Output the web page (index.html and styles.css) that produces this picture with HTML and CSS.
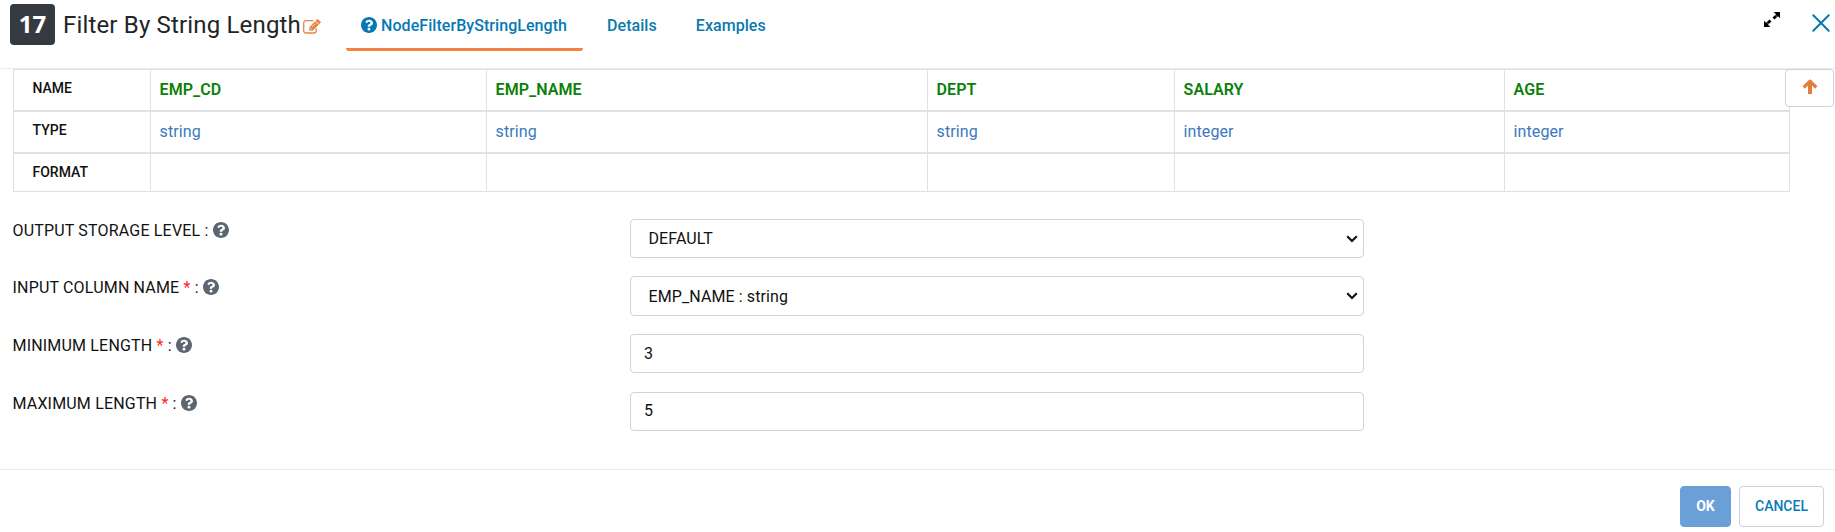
FILE: index.html
```html
<!DOCTYPE html>
<html lang="en">
<head>
<meta charset="utf-8">
<title>Filter By String Length</title>
<link rel="stylesheet" href="styles.css">
</head>
<body>
<svg class="sprite" aria-hidden="true">
  <symbol id="help" viewBox="8 8 496 496"><path fill="currentColor" d="M504 256c0 136.997-111.043 248-248 248S8 392.997 8 256C8 119.083 119.043 8 256 8s248 111.083 248 248zM262.655 90c-54.497 0-89.255 22.957-116.549 63.758-3.536 5.286-2.353 12.415 2.715 16.258l34.699 26.31c5.205 3.947 12.621 3.008 16.665-2.122 17.864-22.658 30.113-35.797 57.303-35.797 20.429 0 45.698 13.148 45.698 32.958 0 14.976-12.363 22.667-32.534 33.976C247.128 238.528 216 254.941 216 296v4c0 6.627 5.373 12 12 12h56c6.627 0 12-5.373 12-12v-1.333c0-28.462 83.186-29.647 83.186-106.667 0-58.002-60.165-102-116.531-102zM256 338c-25.365 0-46 20.635-46 46 0 25.364 20.635 46 46 46s46-20.636 46-46c0-25.365-20.635-46-46-46z"/></symbol>
  <symbol id="chevron" viewBox="0 0 12 8"><path d="M1.200 1.200L6 6l4.800-4.800" fill="none" stroke="currentColor" stroke-width="2.100"/></symbol>
</svg>
<header class="header">
  <span class="badge">17</span>
  <h1 class="title">Filter By String Length</h1>
  <svg class="edit" viewBox="0 0 18 15" fill="none" stroke="currentColor"><path d="M13.2 9.300v2.400a2.300 2.300 0 0 1-2.300 2.300H3a2.300 2.300 0 0 1-2.300-2.300V4A2.300 2.300 0 0 1 3 1.700h7.300" stroke-width="1.300"/><path d="M6.300 11.800V8.200L13.800.5q.8-.8 1.600 0l2 2q.8.800 0 1.600L9.800 11.800z" fill="currentColor" stroke="none"/><path d="M12.300 1.900l3.600 3.600" stroke="#fff" stroke-width=".8"/><path d="M8.800 8l3.500-3.500M7.300 9.200l1.600 1.600" stroke="#fff" stroke-width=".6"/></svg>
  <nav class="tabs">
    <a class="tab active"><svg class="help"><use href="#help"/></svg><span>NodeFilterByStringLength</span></a>
    <a class="tab">Details</a>
    <a class="tab">Examples</a>
  </nav>
  <svg class="expand" viewBox="0 0 16 15"><path d="M9.500 0H16v6.200l-2-2-3.600 3.200-1.900-1.800L12 2.200zM6.500 15H0V8.800l2 2 3.600-3.200 1.900 1.800L4 12.800z"/><path d="M11.200 2.800l1.800 1.800M3 10.400l1.800 1.800" stroke="#fff" stroke-width=".5"/></svg>
  <svg class="close" viewBox="0 0 18 18"><path d="M1.300 1.300l15.400 15.400M16.700 1.300L1.300 16.700" stroke="currentColor" stroke-width="2" stroke-linecap="round"/></svg>
</header>
<main class="main">
  <div class="schema">
    <div class="row"><div class="head">NAME</div><div class="name">EMP_CD</div><div class="name">EMP_NAME</div><div class="name">DEPT</div><div class="name">SALARY</div><div class="name">AGE</div></div>
    <div class="row"><div class="head">TYPE</div><div class="type">string</div><div class="type">string</div><div class="type">string</div><div class="type">integer</div><div class="type">integer</div></div>
    <div class="row last"><div class="head">FORMAT</div><div></div><div></div><div></div><div></div><div></div></div>
  </div>
  <button class="up" aria-label="Up"><svg viewBox="0 0 16 15"><path d="M1.700 8.500L8 2.200l6.300 6.300" fill="none" stroke="currentColor" stroke-width="3.200" stroke-linejoin="round"/><path d="M8 2.500V15" stroke="currentColor" stroke-width="4"/></svg></button>
  <form class="form">
    <div class="field"><label>OUTPUT STORAGE LEVEL :</label><svg class="help"><use href="#help"/></svg><div class="select"><select class="control"><option>DEFAULT</option></select><svg class="chevron"><use href="#chevron"/></svg></div></div>
    <div class="field second"><label>INPUT COLUMN NAME <i>*</i> :</label><svg class="help"><use href="#help"/></svg><div class="select"><select class="control"><option>EMP_NAME : string</option></select><svg class="chevron"><use href="#chevron"/></svg></div></div>
    <div class="field"><label>MINIMUM LENGTH <i>*</i> :</label><svg class="help"><use href="#help"/></svg><input class="control" value="3"></div>
    <div class="field"><label>MAXIMUM LENGTH <i>*</i> :</label><svg class="help"><use href="#help"/></svg><input class="control raised" value="5"></div>
  </form>
</main>
<footer class="footer"><button class="btn ok">OK</button><button class="btn cancel">CANCEL</button></footer>
</body>
</html>
```
FILE: styles.css
```css
* { box-sizing: border-box; }
body { margin: 0; height: 532px; overflow: hidden; display: flex; flex-direction: column; background: #fff; color: #111; font: 16px/24px Roboto, sans-serif; }
.sprite { position: absolute; width: 0; height: 0; }
.header { height: 69px; flex: none; display: flex; align-items: flex-start; padding: 4px 6px 0 10px; border-bottom: 1px solid #e9ecef; }
.badge { width: 45px; height: 41px; border-radius: 4px; background: #343a40; color: #fff; font: bold 24px/40px "Open Sans", sans-serif; text-align: center; }
.title { margin: 7px 0 0 8px; width: 240px; font-size: 24px; line-height: 28px; font-weight: 400; letter-spacing: .17px; color: #212529; white-space: nowrap; }
.edit { width: 18px; height: 15px; margin-top: 15px; color: #e8834a; }
.tabs { display: flex; margin-left: 25px; }
.tab { height: 47px; padding: 10px 16px 0 15px; color: #0679b5; font-weight: 500; white-space: nowrap; }
.tab + .tab { padding: 10px 15px 0 24px; color: #0a79ad; letter-spacing: .06px; }
.active { width: 237px; display: flex; gap: 4px; border-bottom: 3px solid #f5813f; border-radius: 3px; letter-spacing: .06px; }
.help { flex: none; width: 16px; height: 16px; }
.active .help { margin-top: 3px; }
.expand { width: 16px; height: 15px; margin: 8px 32px 0 auto; }
.close { width: 18px; height: 18px; margin-top: 10px; margin-right: -1px; color: #0679ad; }
.main { flex: 1; position: relative; }
.schema { width: 1777px; margin-left: 13px; border: solid #dee2e6; border-width: 1px 1px 0 0; }
.row { display: grid; grid-template-columns: 137px 336px 441px 247px 330px 1fr; height: 42px; border-bottom: 2px solid #dee2e6; }
.row.last { height: 38px; border-bottom-width: 1px; }
.row > div { border-left: 1px solid #dee2e6; padding: 8px 8.600px 0; }
.row > .head { padding: 6px 18.500px 0; font-size: 14px; font-weight: 500; }
.row > .name { color: #0a800a; font-weight: 600; letter-spacing: .05px; }
.row > .type { color: #3b78bd; letter-spacing: .1px; }
.up { position: absolute; top: 0; left: 1785px; width: 49px; height: 38px; padding: 0; border: 1px solid #ced0da; border-radius: 4px; background: #fff; color: #e27d40; }
.up svg { width: 16px; height: 15px; display: block; margin: -4px auto 0; }
.form { padding: 27px 0 0 13px; }
.field { display: grid; grid-template-columns: auto 1fr 734px; column-gap: 4px; width: 1351px; height: 39px; margin-bottom: 19px; }
.field:first-child { margin-bottom: 18px; }
.field.second { height: 40px; margin-bottom: 18px; }
.field label { color: #111; white-space: nowrap; letter-spacing: .18px; margin-left: -.5px; }
.field i { color: #f22; font-style: normal; }
.field .help { margin-top: 3px; color: #5c6670; }
.select { position: relative; height: 100%; }
.select .control { appearance: none; padding: 0 17.500px; }
.chevron { position: absolute; right: 6px; top: 16px; width: 12px; height: 8px; pointer-events: none; }
.control { display: block; width: 734px; height: 100%; border: 1px solid #ced4da; border-radius: 4px; background: #fff; color: #111; font: 16px Roboto, sans-serif; letter-spacing: .1px; padding: 0 13px; }
.raised { padding-bottom: 2px; }
.footer { flex: none; height: 63px; border-top: 1px solid #e9ecef; display: flex; justify-content: flex-end; gap: 8px; padding: 16px 11px 0 0; }
.btn { height: 41px; padding: 0 0 1px; border: 1px solid #ced0da; border-radius: 4px; background: #fff; font: 500 14px Roboto, sans-serif; }
.ok { width: 51px; color: #fff; background: #6a9fd8; border-color: #6a9fd8; font-weight: 700; }
.cancel { width: 85px; color: #0a7cb5; }
```
